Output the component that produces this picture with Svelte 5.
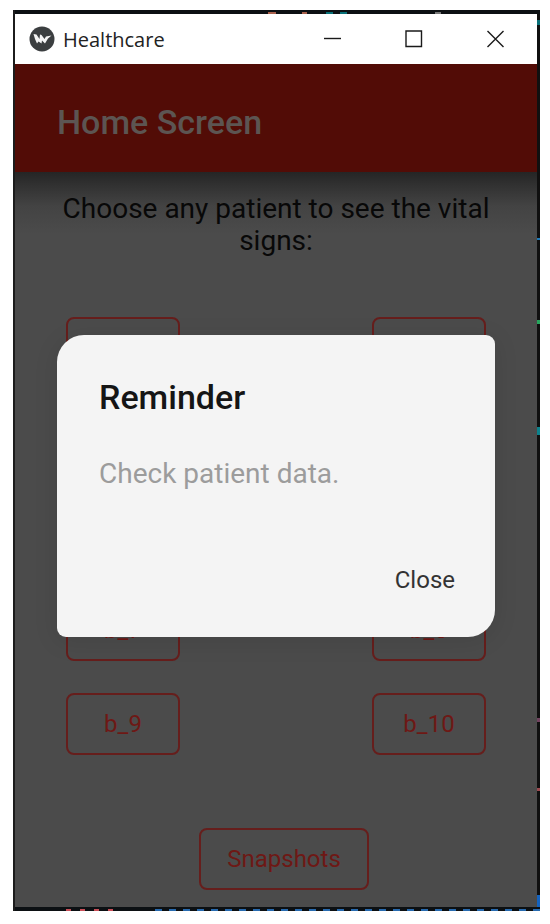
<script>
    const patients = ['b_1', 'b_2', 'b_3', 'b_4', 'b_5', 'b_6', 'b_7', 'b_8', 'b_9', 'b_10'];

    let showReminder = true;

    function closeReminder() {
        showReminder = false;
    }
</script>

<div class="frame">
    <div class="strip top"></div>
    <div class="window">
        <div class="titlebar">
            <svg class="logo" viewBox="0 0 26 26" aria-hidden="true">
                <circle cx="13" cy="13" r="12.5" fill="#3b3e40" />
                <path d="M4.5 8 L7.5 8.5 L10.5 13 L11 8.5 L12.5 9 L15.5 13 L17 10.5 L22.5 9.5 L19 12.5 L16 17.5 L13 14.5 L12.5 17.5 L9.5 15.5 L8 17.5 L6 13 Z" fill="#f4f4f4" />
            </svg>
            <span class="name">Healthcare</span>
            <button class="control" aria-label="Minimize">
                <svg viewBox="0 0 18 18"><path d="M1 8.5H18" /></svg>
            </button>
            <button class="control" aria-label="Maximize">
                <svg viewBox="0 0 18 18"><path d="M1 1H16.5V16.5H1Z" /></svg>
            </button>
            <button class="control" aria-label="Close window">
                <svg viewBox="0 0 18 18"><path d="M0.5 1L16.5 17M16.5 1L0.5 17" /></svg>
            </button>
        </div>

        <div class="screen">
            <header>
                <h1>Home Screen</h1>
            </header>
            <main>
                <p class="hint">Choose any patient to see the vital signs:</p>
                <div class="patients">
                    {#each patients as patient (patient)}
                        <button class="outlined">{patient}</button>
                    {/each}
                </div>
                <div class="actions">
                    <button class="outlined wide">Snapshots</button>
                </div>
            </main>

            {#if showReminder}
                <div class="overlay">
                    <div class="dialog" role="dialog" aria-labelledby="reminder-title">
                        <h2 id="reminder-title">Reminder</h2>
                        <p>Check patient data.</p>
                        <button class="close" on:click={closeReminder}>Close</button>
                    </div>
                </div>
            {/if}
        </div>
    </div>
    <div class="strip side"></div>
    <div class="strip bottom"></div>
</div>

<style>
    :global(body) {
        background: #fff;
        font-family: Roboto, sans-serif;
    }
    button {
        font-family: inherit;
        cursor: pointer;
    }
    .frame {
        display: grid;
        grid-template-columns: 1fr 3px;
        margin: 10px 10px 13px 13px;
        border-left: 2px solid #1c1c1c;
    }
    .strip {
        background: #0c1013;
    }
    .top,
    .bottom {
        grid-column: 1 / 3;
        height: 4px;
    }
    .top {
        background:
            linear-gradient(#a8604c, #a8604c) 253px 2px / 8px 2px no-repeat,
            linear-gradient(#a8604c, #a8604c) 287px 2px / 5px 2px no-repeat,
            linear-gradient(#087078, #087078) 311px 2px / 7px 2px no-repeat,
            linear-gradient(#087078, #087078) 325px 2px / 7px 2px no-repeat,
            linear-gradient(#777, #777) 420px 2px / 6px 2px no-repeat,
            #0c1013;
    }
    .side {
        background:
            linear-gradient(#087078, #087078) 0 6px / 3px 5px no-repeat,
            linear-gradient(#1e7ab8, #1e7ab8) 0 224px / 3px 2px no-repeat,
            linear-gradient(#25a55c, #25a55c) 0 306px / 3px 4px no-repeat,
            linear-gradient(#0c828c, #0c828c) 0 413px / 3px 8px no-repeat,
            linear-gradient(#71435f, #71435f) 0 704px / 3px 4px no-repeat,
            linear-gradient(#9c4a50, #9c4a50) 0 774px / 3px 3px no-repeat,
            linear-gradient(#1463c0, #1463c0) 0 100% / 3px 12px no-repeat,
            #101010;
    }
    .bottom {
        background:
            linear-gradient(#0c1013, #0c1013) 0 0 / 100% 2px no-repeat,
            linear-gradient(#0c1013, #0c1013) 0 0 / 51px 4px no-repeat,
            repeating-linear-gradient(90deg, #c94f58 0 5px, #0c1013 5px 14px) 51px 0 / 52px 4px no-repeat,
            linear-gradient(#0c1013, #0c1013) 103px 0 / 31px 4px no-repeat,
            repeating-linear-gradient(90deg, #286bb0 0 7px, #0c1013 7px 14px);
    }
    .titlebar {
        display: flex;
        align-items: center;
        height: 50px;
        padding-left: 14px;
        background: #fff;
    }
    .logo {
        width: 26px;
        height: 26px;
    }
    .name {
        flex: 1;
        margin-left: 8px;
        font: 20px "Open Sans", sans-serif;
        color: #222;
    }
    .control {
        display: flex;
        align-items: center;
        justify-content: center;
        width: 82px;
        height: 50px;
        padding: 0;
        border: 0;
        background: none;
    }
    .control svg {
        width: 18px;
        height: 18px;
        fill: none;
        stroke: #1a1a1a;
        stroke-width: 1.4;
    }
    .screen {
        position: relative;
        background: #4b4b4b;
    }
    header {
        display: flex;
        align-items: center;
        height: 108px;
        padding: 8px 42px 0;
        box-sizing: border-box;
        background: #520c06;
    }
    h1,
    h2 {
        margin: 0;
        font-size: 34px;
        line-height: 40px;
        font-weight: 500;
    }
    h1 {
        color: #5c5552;
    }
    main {
        padding: 21px 51px 17px;
        background: linear-gradient(#252525, #323232 14px, #434343 34px, #4b4b4b 62px);
    }
    .hint {
        margin: 0 -20px 60px;
        font-size: 28px;
        line-height: 32px;
        text-align: center;
        color: #080808;
    }
    .patients {
        display: grid;
        grid-template-columns: 114px 114px;
        justify-content: space-between;
        gap: 32px 0;
    }
    .outlined {
        height: 62px;
        padding: 0;
        border: 2px solid #661e1c;
        border-radius: 8px;
        background: none;
        color: #6e1815;
        font-size: 24px;
    }
    .actions {
        display: flex;
        justify-content: center;
        margin-top: 73px;
        padding-left: 16px;
    }
    .wide {
        padding: 0 26px;
    }
    .overlay {
        position: absolute;
        inset: 0;
        display: flex;
        align-items: center;
        justify-content: center;
        padding: 0 42px;
    }
    .dialog {
        display: flex;
        flex-direction: column;
        flex: 1;
        padding: 42px 24px 26px 42px;
        border-radius: 27px 9px 27px 9px;
        background: #f4f4f4;
        box-shadow: 0 4px 24px rgba(0, 0, 0, 0.1);
    }
    h2 {
        color: #151515;
    }
    .dialog p {
        margin: 40px 0 58px;
        font-size: 28px;
        line-height: 34px;
        color: #9c9c9c;
    }
    .close {
        align-self: flex-end;
        height: 62px;
        padding: 0 16px;
        border: 0;
        background: none;
        color: #333;
        font-size: 24px;
    }
</style>
